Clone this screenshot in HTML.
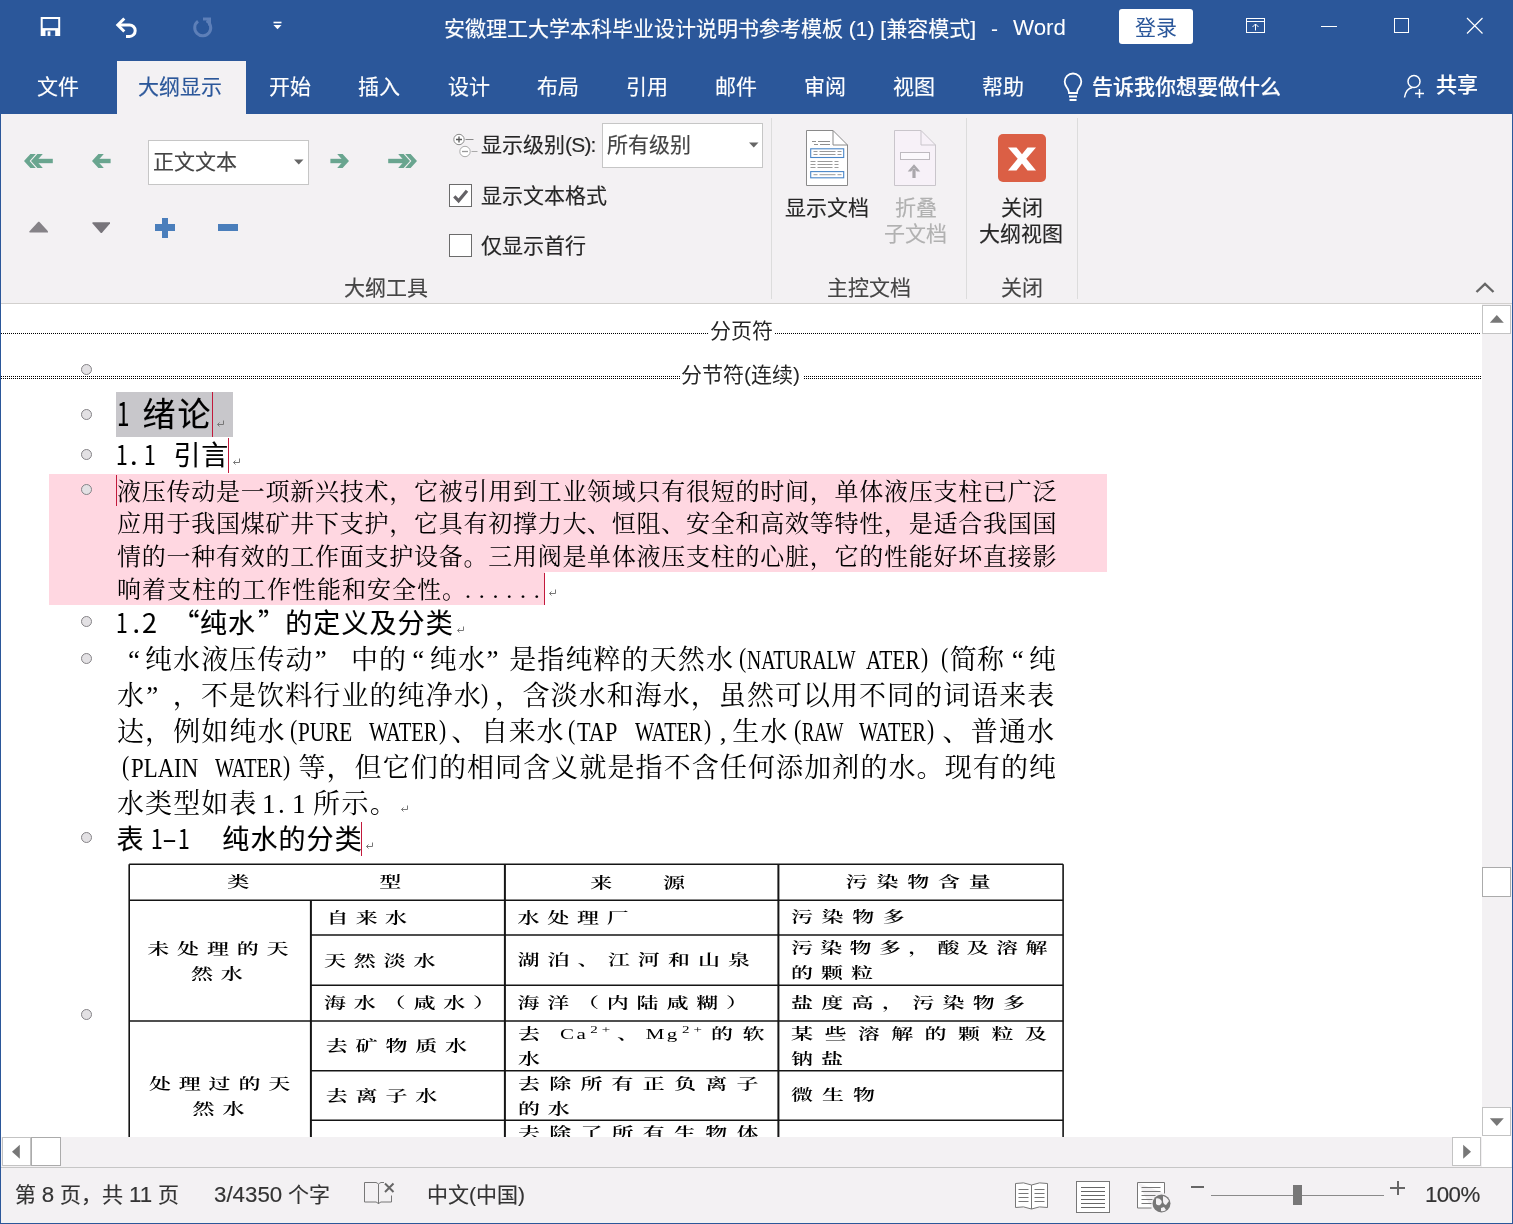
<!DOCTYPE html>
<html lang="zh-CN">
<head>
<meta charset="utf-8">
<title>Word</title>
<style>
*{box-sizing:border-box;margin:0;padding:0}
html,body{width:1513px;height:1224px;overflow:hidden;background:#fff}
body{font-family:"Liberation Sans","Noto Sans CJK SC",sans-serif;color:#262626;position:relative}
.abs{position:absolute}
#win{position:absolute;left:0;top:0;width:1513px;height:1224px;overflow:hidden;background:#fff;will-change:transform}
#titlebar{position:absolute;left:0;top:0;width:1513px;height:114px;background:#2b579a}
.t{position:absolute;white-space:nowrap;line-height:1}
.ui{font-size:21px;color:#262626}
.w{color:#fff}
#ribbon{position:absolute;left:1px;top:114px;width:1511px;height:189px;background:#f3f1f3}
#ribbonline{position:absolute;left:1px;top:303px;width:1511px;height:1px;background:#d2d0ce}
#doc{position:absolute;left:1px;top:304px;width:1481px;height:833px;background:#fff;overflow:hidden}
#vscroll{position:absolute;left:1482px;top:304px;width:30px;height:833px;background:#f3f1f3}
#hscroll{position:absolute;left:1px;top:1137px;width:1511px;height:30px;background:#f3f1f3}
#status{position:absolute;left:1px;top:1168px;width:1511px;height:55px;background:#f3f1f3}
.border-l{position:absolute;left:0;top:0;width:1px;height:1224px;background:#2b579a}
.border-r{position:absolute;left:1512px;top:0;width:1px;height:1224px;background:#2b579a}
.border-b{position:absolute;left:0;top:1223px;width:1513px;height:1px;background:#2b579a}
.tab{top:75px;font-size:21px;line-height:24px}

.dot{position:absolute;height:1px;background:repeating-linear-gradient(90deg,#000 0,#000 1px,transparent 1px,transparent 2px)}
.brk{font-size:21px;line-height:24px;color:#262626}
.bul{position:absolute;width:11px;height:11px;border-radius:50%;border:1px solid #858387;background:#e3e1e4}
.hd{font-family:"Noto Sans CJK SC","Liberation Sans",sans-serif;color:#000;font-weight:400;-webkit-text-stroke:.15px #000}
.bd{font-family:"Liberation Serif","Noto Serif CJK SC",serif;color:#000}
.c{display:inline-block;text-align:center;white-space:nowrap}
.j{text-align:justify;text-align-last:justify}
.ln{position:absolute;left:0;width:1481px;height:30px;white-space:nowrap}
.sg{position:absolute;top:0;white-space:nowrap}
.lat{transform-origin:0 50%;display:inline-block}
.tb{font-family:"Liberation Serif","Noto Serif CJK SC",serif;color:#000;font-weight:600;transform:scaleY(.67);transform-origin:50% 50%}
.tl{font-weight:400 !important}
.tl sup{font-size:15px;vertical-align:9px;line-height:0;letter-spacing:4px;margin-left:2px}
.sb{position:absolute;background:#fff;border:1px solid #c3c3c3}
.st{line-height:24px;color:#333}
.L{font-size:22.3px}
.ui,.tab,.st,#ttl{-webkit-text-stroke:.15px currentColor}
</style>
</head>
<body>
<div id="win">

<div id="titlebar">
<!-- save icon -->
<svg class="abs" style="left:40px;top:16px" width="22" height="22" viewBox="0 0 22 22"><path d="M1.700 2h17.500v16.900H1.700z" fill="none" stroke="#fff" stroke-width="2"/><path d="M1.700 12.100h17.500V18.900H1.700z" fill="#fff"/><rect x="5.500" y="14.500" width="9.700" height="5.400" fill="#2b579a"/><rect x="7.600" y="15.300" width="2.800" height="4.600" fill="#fff"/></svg>
<!-- undo -->
<svg class="abs" style="left:114px;top:16px" width="26" height="24" viewBox="0 0 26 24"><path d="M4.500 9h11a5.700 5.700 0 0 1 0 11.400h-3.500" fill="none" stroke="#fff" stroke-width="3"/><path d="M10.300 2.500L3.800 9l6.500 6.500" fill="none" stroke="#fff" stroke-width="3" stroke-linejoin="miter"/></svg>
<!-- redo (dim) -->
<svg class="abs" style="left:191px;top:16px" width="24" height="24" viewBox="0 0 24 24"><path d="M7 5.300a8 8 0 1 0 8.500 -0.600" fill="none" stroke="#5d7fb8" stroke-width="3"/><path d="M12 3h6.500v6.500" fill="none" stroke="#5d7fb8" stroke-width="3"/></svg>
<!-- qat dropdown -->
<svg class="abs" style="left:272px;top:20px" width="12" height="12" viewBox="0 0 12 12"><rect x="1.500" y="1.700" width="8" height="1.600" fill="#fff"/><path d="M1.500 5h8l-4 4.200z" fill="#fff"/></svg>
<div class="t w" id="ttl" style="left:444px;top:17px;font-size:21px;line-height:24px">安徽理工大学本科毕业设计说明书参考模板 (1) [兼容模式]</div>
<div class="t w" style="left:991px;top:17px;font-size:21px;line-height:24px">-</div>
<div class="t w" style="left:1013px;top:16px;font-size:22.3px;line-height:24px">Word</div>
<div class="abs" style="left:1119px;top:9px;width:74px;height:35px;background:#fff;border-radius:3px"></div>
<div class="t" style="left:1135px;top:16px;font-size:21px;line-height:24px;color:#2b579a">登录</div>
<!-- ribbon display -->
<svg class="abs" style="left:1245px;top:17px" width="22" height="18" viewBox="0 0 22 18"><rect x="1.500" y="1.500" width="18" height="14" fill="none" stroke="#fff" stroke-width="1"/><path d="M1.500 4.500h18" stroke="#fff" stroke-width="1"/><path d="M10.500 13.500v-6.500M7.500 10l3-3 3 3" fill="none" stroke="#fff" stroke-width="1"/></svg>
<div class="abs" style="left:1321px;top:26px;width:16px;height:1px;background:#fff"></div>
<div class="abs" style="left:1394px;top:18px;width:15px;height:15px;border:1px solid #fff"></div>
<svg class="abs" style="left:1466px;top:17px" width="18" height="18" viewBox="0 0 18 18"><path d="M1 1l15.500 15.500M16.500 1L1 16.500" stroke="#fff" stroke-width="1.200" fill="none"/></svg>
<!-- tabs -->
<div class="abs" style="left:117px;top:61px;width:129px;height:53px;background:#f3f1f3"></div>
<div class="t w tab" style="left:37px">文件</div>
<div class="t tab" style="left:138px;color:#2b579a">大纲显示</div>
<div class="t w tab" style="left:269px">开始</div>
<div class="t w tab" style="left:358px">插入</div>
<div class="t w tab" style="left:448px">设计</div>
<div class="t w tab" style="left:537px">布局</div>
<div class="t w tab" style="left:626px">引用</div>
<div class="t w tab" style="left:715px">邮件</div>
<div class="t w tab" style="left:804px">审阅</div>
<div class="t w tab" style="left:893px">视图</div>
<div class="t w tab" style="left:982px">帮助</div>
<!-- bulb -->
<svg class="abs" style="left:1060px;top:71px" width="26" height="34" viewBox="0 0 26 34"><path d="M13 2.500a8.300 8.300 0 0 0-8.300 8.300c0 3.200 1.700 5 2.900 6.800 0.900 1.400 1.400 2.700 1.400 4.400h8c0-1.700 0.500-3 1.400-4.400 1.200-1.800 2.900-3.600 2.900-6.800A8.300 8.300 0 0 0 13 2.500z" fill="none" stroke="#fff" stroke-width="1.800"/><path d="M9 25.500h8M9.500 29h7" stroke="#fff" stroke-width="1.800" fill="none"/></svg>
<div class="t w tab" style="left:1092px;font-weight:500">告诉我你想要做什么</div>
<!-- person -->
<svg class="abs" style="left:1402px;top:73px" width="26" height="28" viewBox="0 0 26 28"><circle cx="12" cy="8.500" r="6" fill="none" stroke="#fff" stroke-width="1.500"/><path d="M2.500 24.500c1-6 4.500-9.500 8-10" fill="none" stroke="#fff" stroke-width="1.500"/><path d="M17.500 16v9M13 20.500h9" stroke="#fff" stroke-width="1.500" fill="none"/></svg>
<div class="t w tab" style="left:1436px;font-weight:500;top:73px">共享</div>
</div>


<div id="ribbon">
<!-- coordinates inside ribbon: x-1, y-114 -->
<!-- double left arrow -->
<svg class="abs" style="left:23px;top:40px" width="30" height="14" viewBox="0 0 30 14"><path d="M0.0 7.0 L6.4 0.0 L11.8 0.0 L5.6 7.0 L11.8 14.0 L6.4 14.0zM7.0 7.0 L13.4 0.0 L18.8 0.0 L12.6 7.0 L18.8 14.0 L13.4 14.0z" fill="#69a58f"/><rect x="11" y="4.800" width="17.800" height="4.400" fill="#69a58f"/></svg>
<!-- left arrow -->
<svg class="abs" style="left:91px;top:40px" width="20" height="14" viewBox="0 0 20 14"><path d="M0.0 7.0 L6.4 0.0 L11.8 0.0 L5.6 7.0 L11.8 14.0 L6.4 14.0z" fill="#69a58f"/><rect x="4" y="4.800" width="14.600" height="4.400" fill="#69a58f"/></svg>
<!-- level select -->
<div class="abs" style="left:147px;top:26px;width:161px;height:45px;background:#fff;border:1px solid #c6c6c6"></div>
<div class="t ui" style="left:152px;top:36px;line-height:24px;color:#444">正文文本</div>
<svg class="abs" style="left:292px;top:44px" width="12" height="8" viewBox="0 0 12 8"><path d="M1 1.500h9.500L5.750 6.500z" fill="#666"/></svg>
<!-- right arrow -->
<svg class="abs" style="left:329px;top:40px" width="20" height="14" viewBox="0 0 20 14"><path d="M19.0 7.0 L12.6 0.0 L7.2 0.0 L13.4 7.0 L7.2 14.0 L12.6 14.0z" fill="#69a58f"/><rect x="0.400" y="4.800" width="14.600" height="4.400" fill="#69a58f"/></svg>
<!-- double right arrow -->
<svg class="abs" style="left:387px;top:40px" width="30" height="14" viewBox="0 0 30 14"><path d="M29.0 7.0 L22.6 0.0 L17.2 0.0 L23.4 7.0 L17.2 14.0 L22.6 14.0zM22.0 7.0 L15.6 0.0 L10.2 0.0 L16.4 7.0 L10.2 14.0 L15.6 14.0z" fill="#69a58f"/><rect x="0.200" y="4.800" width="17.800" height="4.400" fill="#69a58f"/></svg>
<!-- up/down triangles -->
<svg class="abs" style="left:27px;top:106px" width="22" height="14" viewBox="0 0 22 14"><path d="M1.500 12.500v-1.300L10.300 1.700h1L20 11.200v1.300z" fill="#858287"/></svg>
<svg class="abs" style="left:90px;top:107px" width="22" height="14" viewBox="0 0 22 14"><path d="M1.500 1.200h17.500v1.200L10.800 12h-1L1.500 2.400z" fill="#77747a"/></svg>
<!-- plus / minus -->
<div class="abs" style="left:154px;top:110px;width:20px;height:7px;background:#4a7ebb"></div>
<div class="abs" style="left:161px;top:104px;width:6px;height:20px;background:#4a7ebb"></div>
<div class="abs" style="left:217px;top:110px;width:20px;height:7px;background:#4a7ebb"></div>
<!-- show level icon -->
<svg class="abs" style="left:450px;top:18px" width="28" height="28" viewBox="0 0 28 28"><circle cx="8" cy="7.500" r="5.200" fill="#fff" stroke="#8a8a8a" stroke-width="1"/><path d="M5 7.500h6M8 4.500v6" stroke="#555" stroke-width="1.300"/><path d="M14.500 7.500h8" stroke="#8a8a8a" stroke-width="1"/><circle cx="14" cy="19.500" r="5.200" fill="#fff" stroke="#aaa" stroke-width="1"/><path d="M11 19.500h6" stroke="#999" stroke-width="1.300"/><path d="M20.500 19.500h6" stroke="#aaa" stroke-width="1"/></svg>
<div class="t ui" style="left:480px;top:19px;line-height:24px">显示级别<span style="letter-spacing:-.8px">(S):</span></div>
<div class="abs" style="left:601px;top:9px;width:161px;height:45px;background:#fff;border:1px solid #c6c6c6"></div>
<div class="t ui" style="left:606px;top:19px;line-height:24px;color:#444">所有级别</div>
<svg class="abs" style="left:747px;top:27px" width="12" height="8" viewBox="0 0 12 8"><path d="M1 1.500h9.500L5.750 6.500z" fill="#666"/></svg>
<!-- checkboxes -->
<div class="abs" style="left:448px;top:70px;width:23px;height:23px;background:#fff;border:1px solid #6b6b6b"></div>
<svg class="abs" style="left:451px;top:74px" width="18" height="16" viewBox="0 0 18 16"><path d="M2.300 8.300l4.300 4.500L15 2.800" fill="none" stroke="#646266" stroke-width="3.200"/></svg>
<div class="t ui" style="left:480px;top:70px;line-height:24px">显示文本格式</div>
<div class="abs" style="left:448px;top:120px;width:23px;height:23px;background:#fff;border:1px solid #6b6b6b"></div>
<div class="t ui" style="left:480px;top:120px;line-height:24px">仅显示首行</div>
<div class="t ui" style="left:343px;top:162px;line-height:24px;color:#444">大纲工具</div>
<div class="abs" style="left:770px;top:4px;width:1px;height:181px;background:#dcdcdc"></div>
<div class="abs" style="left:965px;top:4px;width:1px;height:181px;background:#dcdcdc"></div>
<div class="abs" style="left:1076px;top:4px;width:1px;height:181px;background:#dcdcdc"></div>
<!-- show document icon -->
<svg class="abs" style="left:804px;top:15px" width="46" height="58" viewBox="0 0 46 58"><path d="M1.500 1.500h26.500l14.500 14.500v40.500h-41z" fill="#fff" stroke="#8a8a8a" stroke-width="1"/><path d="M28 1.500v14.500h14.500" fill="none" stroke="#8a8a8a" stroke-width="1"/><path d="M7 12.500h4M13 12.500h12M9 15.500h4M15 15.500h10" stroke="#8e8e8e" stroke-width="1"/><rect x="5.700" y="19.800" width="33" height="8.700" fill="#fff" stroke="#4a86c8" stroke-width="1.100"/><path d="M8.500 22.500h4M14.500 22.500h16M32.500 22.500h4M8.500 25.500h4M14.500 25.500h16M32.500 25.500h4" stroke="#9a9a9a" stroke-width="1"/><path d="M5.500 32.500h5M12.500 32.500h15M29.500 32.500h4M5.500 35.500h5M12.500 35.500h15M29.500 35.500h4M5.500 38.500h5M12.500 38.500h15M29.500 38.500h4" stroke="#9a9a9a" stroke-width="1"/><rect x="5.700" y="42.600" width="33" height="6.200" fill="#fff" stroke="#4a86c8" stroke-width="1.100"/><path d="M8.500 45.700h4M14.500 45.700h16M32.500 45.700h4" stroke="#9a9a9a" stroke-width="1"/></svg>
<div class="t ui" style="left:784px;top:82px;line-height:24px;color:#262626">显示文档</div>
<!-- collapse subdoc icon (disabled) -->
<svg class="abs" style="left:892px;top:15px" width="46" height="58" viewBox="0 0 46 58"><path d="M1.500 1.500h26.500l14.500 14.500v40.500h-41z" fill="#f7f1f8" stroke="#c9c5cb" stroke-width="1"/><path d="M28 1.500v14.500h14.500" fill="none" stroke="#c9c5cb" stroke-width="1"/><rect x="7.500" y="23.500" width="29" height="7" fill="#fbf8fc" stroke="#bdb9bf" stroke-width="1"/><path d="M21 49v-9" fill="none" stroke="#aaa7ac" stroke-width="3.200"/><path d="M14.700 42.500l6.300-7.300 6.300 7.300h-3.400l-2.900-3.400-2.900 3.400z" fill="#aaa7ac"/></svg>
<div class="t ui" style="left:894px;top:82px;line-height:24px;color:#b1b1b1">折叠</div>
<div class="t ui" style="left:883px;top:108px;line-height:24px;color:#b1b1b1">子文档</div>
<!-- close outline -->
<div class="abs" style="left:997px;top:20px;width:48px;height:48px;background:#db5f45;border-radius:5px"></div>
<svg class="abs" style="left:1006px;top:32px" width="30" height="26" viewBox="0 0 30 26"><path d="M1 1.500h8.500l5.500 6.700 5.500-6.700h8.500l-9.700 11.300 9.700 11.700h-8.500l-5.500-7-5.500 7h-8.500l9.700-11.700z" fill="#fff"/></svg>
<div class="t ui" style="left:1000px;top:82px;line-height:24px">关闭</div>
<div class="t ui" style="left:978px;top:108px;line-height:24px">大纲视图</div>
<div class="t ui" style="left:826px;top:162px;line-height:24px;color:#444">主控文档</div>
<div class="t ui" style="left:1000px;top:162px;line-height:24px;color:#444">关闭</div>
<svg class="abs" style="left:1473px;top:167px" width="22" height="14" viewBox="0 0 22 14"><path d="M2.500 11L11 3l8.500 8" fill="none" stroke="#666" stroke-width="2.400"/></svg>
</div>

<div id="ribbonline"></div>
<div id="doc">
<!--DOC-START-->
<div class="dot" style="left:0px;top:29px;width:708px"></div>
<div class="dot" style="left:774px;top:29px;width:706px"></div>
<div class="dot" style="left:0px;top:72px;width:679px"></div>
<div class="dot" style="left:803px;top:72px;width:677px"></div>
<div class="dot" style="left:0px;top:74px;width:679px"></div>
<div class="dot" style="left:803px;top:74px;width:677px"></div>
<div class="t brk" style="left:709px;top:15px">分页符</div>
<div class="t brk" style="left:680px;top:59px">分节符(连续)</div>
<div class="abs" style="left:115px;top:88px;width:117px;height:45px;background:#c8c7cb"></div>
<div class="abs" style="left:48px;top:170px;width:1058px;height:98px;background:#ffd7e1"></div>
<div class="abs" style="left:48px;top:268px;width:496px;height:33px;background:#ffd7e1"></div>
<div class="bul" style="left:80px;top:60px"></div>
<div class="bul" style="left:80px;top:105px"></div>
<div class="bul" style="left:80px;top:145px"></div>
<div class="bul" style="left:80px;top:180px"></div>
<div class="bul" style="left:80px;top:312px"></div>
<div class="bul" style="left:80px;top:349px"></div>
<div class="bul" style="left:80px;top:528px"></div>
<div class="bul" style="left:80px;top:705px"></div>
<div class="abs" style="left:211px;top:88px;width:1px;height:45px;background:#c2193b"></div>
<div class="abs" style="left:227px;top:134px;width:1px;height:35px;background:#c2193b"></div>
<div class="abs" style="left:115px;top:171px;width:1px;height:31px;background:#c2193b"></div>
<div class="abs" style="left:543px;top:269px;width:1px;height:32px;background:#c2193b"></div>
<div class="abs" style="left:360px;top:518px;width:1px;height:34px;background:#c2193b"></div>
<svg class="abs" style="left:214.5px;top:115.5px" width="9" height="8" viewBox="0 0 9 8"><path d="M7.500 0.500v4h-6M3.500 2.500l-2 2 2 2" fill="none" stroke="#777" stroke-width="1"/></svg>
<svg class="abs" style="left:230.5px;top:154px" width="9" height="8" viewBox="0 0 9 8"><path d="M7.500 0.500v4h-6M3.500 2.500l-2 2 2 2" fill="none" stroke="#777" stroke-width="1"/></svg>
<svg class="abs" style="left:546.5px;top:284.5px" width="9" height="8" viewBox="0 0 9 8"><path d="M7.500 0.500v4h-6M3.500 2.500l-2 2 2 2" fill="none" stroke="#777" stroke-width="1"/></svg>
<svg class="abs" style="left:454.5px;top:321.5px" width="9" height="8" viewBox="0 0 9 8"><path d="M7.500 0.500v4h-6M3.500 2.500l-2 2 2 2" fill="none" stroke="#777" stroke-width="1"/></svg>
<svg class="abs" style="left:399px;top:501px" width="9" height="8" viewBox="0 0 9 8"><path d="M7.500 0.500v4h-6M3.500 2.500l-2 2 2 2" fill="none" stroke="#777" stroke-width="1"/></svg>
<svg class="abs" style="left:364px;top:537.5px" width="9" height="8" viewBox="0 0 9 8"><path d="M7.500 0.500v4h-6M3.500 2.500l-2 2 2 2" fill="none" stroke="#777" stroke-width="1"/></svg>
<div class="ln hd" style="top:92.2px;font-size:33px;line-height:33px">
<span class="sg lat" style="left:115.8px;transform:scaleX(0.68)">1</span>
<span class="sg" style="left:141.4px;letter-spacing:2px">绪论</span>
</div>
<div class="ln hd" style="top:136.2px;font-size:27px;line-height:27px">
<span class="sg lat" style="left:115.4px;transform:scaleX(0.78)">1</span>
<span class="sg" style="left:129px;letter-spacing:-13px">.</span>
<span class="sg lat" style="left:143px;transform:scaleX(0.78)">1</span>
<span class="sg" style="left:172.6px;letter-spacing:0.6px">引言</span>
</div>
<div class="ln hd" style="top:304px;font-size:27px;line-height:27px">
<span class="sg lat" style="left:115.4px;transform:scaleX(0.78)">1</span>
<span class="sg" style="left:131.5px;letter-spacing:-13px">.</span>
<span class="sg" style="left:141px;letter-spacing:-13px">2</span>
<span class="sg" style="left:171.5px;letter-spacing:1px">“</span>
<span class="sg" style="left:199px;letter-spacing:1.1px">纯水</span>
<span class="sg" style="left:257px;letter-spacing:1px">”</span>
<span class="sg" style="left:284.2px;letter-spacing:1.1px">的定义及分类</span>
</div>
<div class="ln hd" style="top:520.2px;font-size:27px;line-height:27px">
<span class="sg" style="left:115.5px;letter-spacing:1px">表</span>
<span class="sg lat" style="left:149.6px;transform:scaleX(0.78)">1</span>
<span class="sg lat" style="left:161.2px;transform:scaleX(1.6)">-</span>
<span class="sg lat" style="left:177.2px;transform:scaleX(0.78)">1</span>
<span class="sg" style="left:221.3px;letter-spacing:1.1px">纯水的分类</span>
</div>
<div class="t bd j" style="left:116px;top:175.5px;width:939.5px;font-size:24px;line-height:24px">液压传动是一项新兴技术，它被引用到工业领域只有很短的时间，单体液压支柱已广泛</div>
<div class="t bd j" style="left:116px;top:208.2px;width:939.5px;font-size:24px;line-height:24px">应用于我国煤矿井下支护，它具有初撑力大、恒阻、安全和高效等特性，是适合我国国</div>
<div class="t bd j" style="left:116px;top:240.9px;width:939.5px;font-size:24px;line-height:24px">情的一种有效的工作面支护设备。三用阀是单体液压支柱的心脏，它的性能好坏直接影</div>
<div class="t bd" style="left:116px;top:273.6px;font-size:24px;line-height:24px;letter-spacing:1px">响着支柱的工作性能和安全性。<span style="letter-spacing:0;margin-left:-2px"><span class="c" style="width:13.75px;text-align:left">.</span><span class="c" style="width:13.75px;text-align:left">.</span><span class="c" style="width:13.75px;text-align:left">.</span><span class="c" style="width:13.75px;text-align:left">.</span><span class="c" style="width:13.75px;text-align:left">.</span><span class="c" style="width:13.75px;text-align:left">.</span></span></div>
<div class="ln bd" style="top:342.7px;font-size:27px;line-height:27px">
<span class="sg lat" style="left:127px;transform:scaleX(1.0)">“</span>
<span class="sg" style="left:144px;letter-spacing:1.1px">纯水液压传动</span>
<span class="sg lat" style="left:313.8px;transform:scaleX(1.0)">”</span>
<span class="sg" style="left:350px;letter-spacing:1.1px">中的</span>
<span class="sg lat" style="left:411.3px;transform:scaleX(1.0)">“</span>
<span class="sg" style="left:428.8px;letter-spacing:1.1px">纯水</span>
<span class="sg lat" style="left:485.5px;transform:scaleX(1.0)">”</span>
<span class="sg" style="left:508.2px;letter-spacing:1.1px">是指纯粹的天然水</span>
<span class="sg lat" style="left:737.6px;transform:scaleX(0.8);top:-2px">(</span>
<span class="sg lat" style="left:745.7px;transform:scaleX(0.7265)">NATURALW</span>
<span class="sg lat" style="left:865.3px;transform:scaleX(0.7956)">ATER</span>
<span class="sg lat" style="left:920px;transform:scaleX(0.8);top:-2px">)</span>
<span class="sg lat" style="left:940px;transform:scaleX(0.8);top:-2px">(</span>
<span class="sg" style="left:948.8px;letter-spacing:0.3px">简称</span>
<span class="sg lat" style="left:1010.8px;transform:scaleX(1.0)">“</span>
<span class="sg" style="left:1028px;letter-spacing:1.1px">纯</span>
</div>
<div class="ln bd" style="top:378.7px;font-size:27px;line-height:27px">
<span class="sg" style="left:116px;letter-spacing:1.1px">水</span>
<span class="sg lat" style="left:145.3px;transform:scaleX(1.0)">”</span>
<span class="sg" style="left:171.8px;letter-spacing:1.1px">，不是饮料行业的纯净水</span>
<span class="sg lat" style="left:480px;transform:scaleX(0.8);top:-2px">)</span>
<span class="sg" style="left:494px;letter-spacing:1.1px">，</span>
<span class="sg" style="left:521.6px;letter-spacing:1.04px">含淡水和海水，虽然可以用不同的词语来表</span>
</div>
<div class="ln bd" style="top:414.7px;font-size:27px;line-height:27px">
<span class="sg" style="left:116px;letter-spacing:1.1px">达，例如纯水</span>
<span class="sg lat" style="left:288.5px;transform:scaleX(0.8);top:-2px">(</span>
<span class="sg lat" style="left:296.6px;transform:scaleX(0.7868)">PURE</span>
<span class="sg lat" style="left:368px;transform:scaleX(0.7612)">WATER</span>
<span class="sg lat" style="left:437.7px;transform:scaleX(0.8);top:-2px">)</span>
<span class="sg" style="left:450.5px;letter-spacing:1.1px">、</span>
<span class="sg" style="left:480px;letter-spacing:0.8px">自来水</span>
<span class="sg lat" style="left:567px;transform:scaleX(0.8);top:-2px">(</span>
<span class="sg lat" style="left:575.7px;transform:scaleX(0.8251)">TAP</span>
<span class="sg lat" style="left:634.4px;transform:scaleX(0.7478)">WATER</span>
<span class="sg lat" style="left:703px;transform:scaleX(0.8);top:-2px">)</span>
<span class="sg lat" style="left:718.8px;transform:scaleX(1.0)">,</span>
<span class="sg" style="left:731.3px;letter-spacing:1.1px">生水</span>
<span class="sg lat" style="left:793px;transform:scaleX(0.8);top:-2px">(</span>
<span class="sg lat" style="left:800.5px;transform:scaleX(0.6822)">RAW</span>
<span class="sg lat" style="left:858px;transform:scaleX(0.7445)">WATER</span>
<span class="sg lat" style="left:926px;transform:scaleX(0.8);top:-2px">)</span>
<span class="sg" style="left:941.5px;letter-spacing:1.1px">、</span>
<span class="sg" style="left:969.8px;letter-spacing:1.1px">普通水</span>
</div>
<div class="ln bd" style="top:450.7px;font-size:27px;line-height:27px">
<span class="sg lat" style="left:121px;transform:scaleX(0.8);top:-2px">(</span>
<span class="sg lat" style="left:129.6px;transform:scaleX(0.8453)">PLAIN</span>
<span class="sg lat" style="left:214px;transform:scaleX(0.7478)">WATER</span>
<span class="sg lat" style="left:282.4px;transform:scaleX(0.8);top:-2px">)</span>
<span class="sg" style="left:297.5px;letter-spacing:1.1px">等，</span>
<span class="sg" style="left:353.6px;letter-spacing:1.1px">但它们的相同含义就是指不含任何添加剂的水。现有的纯</span>
</div>
<div class="ln bd" style="top:486.7px;font-size:27px;line-height:27px">
<span class="sg" style="left:116px;letter-spacing:1.1px">水类型如表</span>
<span class="sg lat" style="left:261px;transform:scaleX(1.0)">1</span>
<span class="sg lat" style="left:277px;transform:scaleX(1.0)">.</span>
<span class="sg lat" style="left:291px;transform:scaleX(1.0)">1</span>
<span class="sg" style="left:312px;letter-spacing:1.4px">所示。</span>
</div>
<svg class="abs" style="left:0;top:0" width="1481" height="833" viewBox="0 0 1481 833" fill="none"><path d="M128.2 560.2L1062.1 560.2" stroke="#151515" stroke-width="1.4"/><path d="M128.2 560.2L128.2 833" stroke="#151515" stroke-width="1.6"/><path d="M1062.1 560.2L1062.1 833" stroke="#151515" stroke-width="1.6"/><path d="M503.9 560.2L503.9 833" stroke="#151515" stroke-width="2"/><path d="M777.4 560.2L777.4 833" stroke="#151515" stroke-width="2"/><path d="M309.9 596.2L309.9 833" stroke="#151515" stroke-width="2"/><path d="M128.2 596.2L1062.1 596.2" stroke="#151515" stroke-width="1.6"/><path d="M309.9 631L1062.1 631" stroke="#151515" stroke-width="1.6"/><path d="M309.9 681.2L1062.1 681.2" stroke="#151515" stroke-width="1.6"/><path d="M128.2 717L1062.1 717" stroke="#151515" stroke-width="1.6"/><path d="M309.9 766.7L1062.1 766.7" stroke="#151515" stroke-width="1.6"/><path d="M309.9 816.3L1062.1 816.3" stroke="#151515" stroke-width="1.6"/></svg>
<div class="t tb" style="left:226.3px;top:567.4px;font-size:22px;line-height:22px;letter-spacing:7.8px">类</div>
<div class="t tb" style="left:378.3px;top:567.4px;font-size:22px;line-height:22px;letter-spacing:7.8px">型</div>
<div class="t tb" style="left:589.2px;top:567.6px;font-size:22px;line-height:22px;letter-spacing:7.8px">来</div>
<div class="t tb" style="left:662px;top:567.6px;font-size:22px;line-height:22px;letter-spacing:7.8px">源</div>
<div class="t tb" style="left:844.6px;top:567.4px;font-size:22px;line-height:22px;letter-spacing:8.8px">污染物含量</div>
<div class="t tb" style="left:146.3px;top:633.5px;font-size:22px;line-height:22px;letter-spacing:7.8px">未处理的天</div>
<div class="t tb" style="left:190px;top:659px;font-size:22px;line-height:22px;letter-spacing:7.8px">然水</div>
<div class="t tb" style="left:148px;top:768.6px;font-size:22px;line-height:22px;letter-spacing:7.8px">处理过的天</div>
<div class="t tb" style="left:191.6px;top:793.5px;font-size:22px;line-height:22px;letter-spacing:7.8px">然水</div>
<div class="t tb" style="left:325.5px;top:603.4px;font-size:22px;line-height:22px;letter-spacing:7.3px">自来水</div>
<div class="t tb" style="left:323px;top:645.7px;font-size:22px;line-height:22px;letter-spacing:7.8px">天然淡水</div>
<div class="t tb" style="left:323px;top:688px;font-size:22px;line-height:22px;letter-spacing:7.8px">海水（咸水）</div>
<div class="t tb" style="left:324.8px;top:731px;font-size:22px;line-height:22px;letter-spacing:7.8px">去矿物质水</div>
<div class="t tb" style="left:324.8px;top:780.5px;font-size:22px;line-height:22px;letter-spacing:7.8px">去离子水</div>
<div class="t tb" style="left:516.4px;top:602.8px;font-size:22px;line-height:22px;letter-spacing:7.8px">水处理厂</div>
<div class="t tb" style="left:516.4px;top:645px;font-size:22px;line-height:22px;letter-spacing:8.1px">湖泊、江河和山泉</div>
<div class="t tb" style="left:516.4px;top:688.2px;font-size:22px;line-height:22px;letter-spacing:7.8px">海洋（内陆咸糊）</div>
<div class="t tb" style="left:517px;top:719.4px;font-size:22px;line-height:22px;letter-spacing:7.8px">去</div>
<div class="t tb tl" style="left:559px;top:719.9px;font-size:21px;line-height:21px;letter-spacing:2.5px">Ca<sup>2+</sup></div>
<div class="t tb" style="left:616px;top:719.4px;font-size:22px;line-height:22px;letter-spacing:7.8px">、</div>
<div class="t tb tl" style="left:644.7px;top:719.9px;font-size:21px;line-height:21px;letter-spacing:2.5px">Mg<sup>2+</sup></div>
<div class="t tb" style="left:710px;top:719.4px;font-size:22px;line-height:22px;letter-spacing:9.5px">的软</div>
<div class="t tb" style="left:517px;top:743.5px;font-size:22px;line-height:22px;letter-spacing:7.8px">水</div>
<div class="t tb" style="left:517px;top:768.6px;font-size:22px;line-height:22px;letter-spacing:9.2px">去除所有正负离子</div>
<div class="t tb" style="left:517px;top:793.7px;font-size:22px;line-height:22px;letter-spacing:7.8px">的水</div>
<div class="t tb" style="left:517px;top:817.9px;font-size:22px;line-height:22px;letter-spacing:9.2px">去除了所有生物体</div>
<div class="t tb" style="left:790px;top:602.2px;font-size:22px;line-height:22px;letter-spacing:8.6px">污染物多</div>
<div class="t tb" style="left:790px;top:633px;font-size:22px;line-height:22px;letter-spacing:7.3px">污染物多，酸及溶解</div>
<div class="t tb" style="left:790px;top:658.3px;font-size:22px;line-height:22px;letter-spacing:8px">的颗粒</div>
<div class="t tb" style="left:790px;top:687.8px;font-size:22px;line-height:22px;letter-spacing:8.3px">盐度高，污染物多</div>
<div class="t tb" style="left:790px;top:718.7px;font-size:22px;line-height:22px;letter-spacing:11.4px">某些溶解的颗粒及</div>
<div class="t tb" style="left:790px;top:743.6px;font-size:22px;line-height:22px;letter-spacing:8px">钠盐</div>
<div class="t tb" style="left:790px;top:780px;font-size:22px;line-height:22px;letter-spacing:9px">微生物</div>
<!--DOC-END-->
</div>
<div id="vscroll">
<div class="sb" style="left:0;top:1px;width:29px;height:29px"></div>
<svg class="abs" style="left:7px;top:10px" width="16" height="10" viewBox="0 0 16 10"><path d="M0.800 8.800L7.800 1l7 7.800z" fill="#777"/></svg>
<div class="sb" style="left:0;top:563px;width:29px;height:30px;border-color:#ababab"></div>
<div class="sb" style="left:0;top:803px;width:29px;height:29px"></div>
<svg class="abs" style="left:7px;top:813px" width="16" height="10" viewBox="0 0 16 10"><path d="M0.800 1.200h14L7.800 9z" fill="#777"/></svg>
</div>
<div id="hscroll">
<div class="sb" style="left:1px;top:0;width:29px;height:29px"></div>
<svg class="abs" style="left:10px;top:7px" width="10" height="16" viewBox="0 0 10 16"><path d="M8.800 0.800L1 7.800l7.800 7z" fill="#777"/></svg>
<div class="sb" style="left:30px;top:0;width:30px;height:29px;border-color:#ababab"></div>
<div class="sb" style="left:1451px;top:0;width:29px;height:29px"></div>
<svg class="abs" style="left:1461px;top:7px" width="10" height="16" viewBox="0 0 10 16"><path d="M1.200 0.800L9 7.800l-7.800 7z" fill="#777"/></svg>
<div class="abs" style="left:1481px;top:-1px;width:29px;height:31px;background:#fff"></div>
</div>
<div class="abs" style="left:1px;top:1167px;width:1511px;height:1px;background:#c6c6c6"></div>
<div id="status">
<div class="t ui st" style="left:14px;top:15.3px">第 <span class="L">8</span> 页，共 <span class="L">11</span> 页</div>
<div class="t ui st" style="left:213px;top:15.3px"><span class="L">3/4350</span> 个字</div>
<svg class="abs" style="left:362px;top:11px" width="36" height="28" viewBox="0 0 36 28"><path d="M1.500 3.500h11.500q2 0.500 2.500 2v19.500q-0.500-1.500-2.500-2h-11.500z" fill="none" stroke="#777" stroke-width="1"/><path d="M15.500 25V5.500q0.500-1.500 2.500-2h3" fill="none" stroke="#777" stroke-width="1"/><path d="M15.500 25q0.500-1.500 2.500-2h10.500v-6.500" fill="none" stroke="#777" stroke-width="1"/><path d="M22 4.500l8.500 8.500M30.500 4.500L22 13" stroke="#666" stroke-width="2" fill="none"/></svg>
<div class="t ui st" style="left:426px;top:15.3px">中文(中国)</div>
<!-- read mode -->
<svg class="abs" style="left:1013px;top:13px" width="36" height="32" viewBox="0 0 36 32"><path d="M1.500 2.500q8-2 16 1.500q8-3.500 16-1.500v24q-8-2-16 1.500q-8-3.500-16-1.500z" fill="#fff" stroke="#777" stroke-width="1"/><path d="M17.500 4v24" stroke="#777" stroke-width="1"/><path d="M4.500 8.500h10M4.500 12.500h10M4.500 16.500h10M4.500 20.500h10M20.500 8.500h10M20.500 12.500h10M20.500 16.500h10M20.500 20.500h10" stroke="#777" stroke-width="1"/></svg>
<!-- print layout -->
<svg class="abs" style="left:1074px;top:12px" width="36" height="34" viewBox="0 0 36 34"><rect x="1.500" y="1.500" width="33" height="31" fill="#fff" stroke="#777" stroke-width="1"/><path d="M6 7.500h24M6 11.500h24M6 15.500h24M6 19.500h24M6 23.500h24M6 27.500h24" stroke="#666" stroke-width="1"/></svg>
<!-- web layout -->
<svg class="abs" style="left:1135px;top:13px" width="36" height="34" viewBox="0 0 36 34"><path d="M1.500 1.500h27v11M1.500 1.500v25.500h14" fill="#fff" stroke="#777" stroke-width="1"/><path d="M5.500 6.500h19M5.500 10.500h19M5.500 14.500h14M5.500 18.500h11M5.500 22.500h10" stroke="#777" stroke-width="1"/><circle cx="25.500" cy="22.500" r="9" fill="#777"/><path d="M20 17.500q3-1 5 1.500t-1 5q-2 1-4-1zM27 15q4 1 6 5l-3 4q-3-1-3-4zM25 27l3-1 2 3q-3 2-5 1z" fill="#f3f1f3"/></svg>
<div class="abs" style="left:1190px;top:18px;width:13px;height:2px;background:#666"></div>
<div class="abs" style="left:1210px;top:27px;width:173px;height:1px;background:#8a8a8a"></div>
<div class="abs" style="left:1292px;top:17px;width:9px;height:20px;background:#777"></div>
<div class="abs" style="left:1389px;top:19px;width:15px;height:2px;background:#666"></div>
<div class="abs" style="left:1395.500px;top:13px;width:2px;height:14px;background:#666"></div>
<div class="t ui st" style="left:1424px;top:15.3px"><span class="L" style="letter-spacing:-.6px">100%</span></div>
</div>
<div class="border-l"></div><div class="border-r"></div><div class="border-b"></div>
</div>
</body>
</html>
